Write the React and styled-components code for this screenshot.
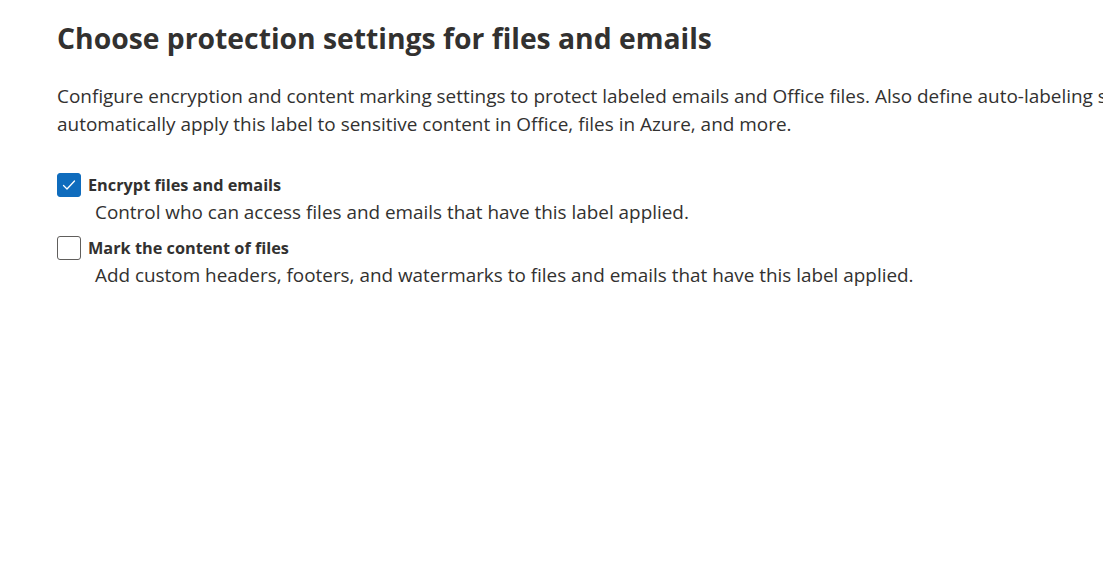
import React from "react";
import styled, { createGlobalStyle } from "styled-components";

const Global = createGlobalStyle`
  html, body { margin: 0; padding: 0; background: #fff; overflow: hidden; }
  body { font-family: "Open Sans", "Noto Sans", sans-serif; color: #323130; }
`;

const Page = styled.div`
  width: 1300px;
  padding: 18px 0 0 57px;
  box-sizing: border-box;
`;

const Title = styled.h1`
  margin: 0;
  font-size: 28.3px;
  font-weight: 700;
  line-height: 40px;
  color: #323130;
`;

const Intro = styled.p`
  margin: 24px 0 0;
  width: 1160px;
  font-size: 18.95px;
  line-height: 28px;
`;

const Options = styled.div`
  margin-top: 35px;
  display: flex;
  flex-direction: column;
  gap: 10px;
`;

const Option = styled.div`
  display: flex;
  flex-direction: column;
`;

const Row = styled.label`
  display: flex;
  align-items: center;
  gap: 7px;
`;

const Box = styled.span`
  width: 24px;
  height: 24px;
  box-sizing: border-box;
  border-radius: 3px;
  border: 1px solid ${(p) => (p.$checked ? "#0f6cbd" : "#605e5c")};
  background: ${(p) => (p.$checked ? "#0f6cbd" : "#fff")};
  display: flex;
  align-items: center;
  justify-content: center;
`;

const Label = styled.span`
  font-size: 16.3px;
  font-weight: 700;
  line-height: 24px;
`;

const Desc = styled.div`
  margin: 1px 0 0 38px;
  font-size: 18.9px;
  line-height: 28px;
`;

function Check({ checked }) {
  return (
    <Box $checked={checked}>
      {checked && (
        <svg width="16" height="16" viewBox="0 0 16 16" fill="none">
          <path d="M2.5 8.5 L6 12 L13.5 4" stroke="#fff" strokeWidth="1.3" strokeLinecap="round" strokeLinejoin="round" />
        </svg>
      )}
    </Box>
  );
}

export default function App() {
  return (
    <>
      <Global />
      <Page>
        <Title>Choose protection settings for files and emails</Title>
        <Intro>
          Configure encryption and content marking settings to protect labeled emails and Office files. Also define auto-labeling settings to
          automatically apply this label to sensitive content in Office, files in Azure, and more.
        </Intro>
        <Options>
          <Option>
            <Row>
              <Check checked />
              <Label>Encrypt files and emails</Label>
            </Row>
            <Desc>Control who can access files and emails that have this label applied.</Desc>
          </Option>
          <Option>
            <Row>
              <Check />
              <Label>Mark the content of files</Label>
            </Row>
            <Desc>Add custom headers, footers, and watermarks to files and emails that have this label applied.</Desc>
          </Option>
        </Options>
      </Page>
    </>
  );
}
